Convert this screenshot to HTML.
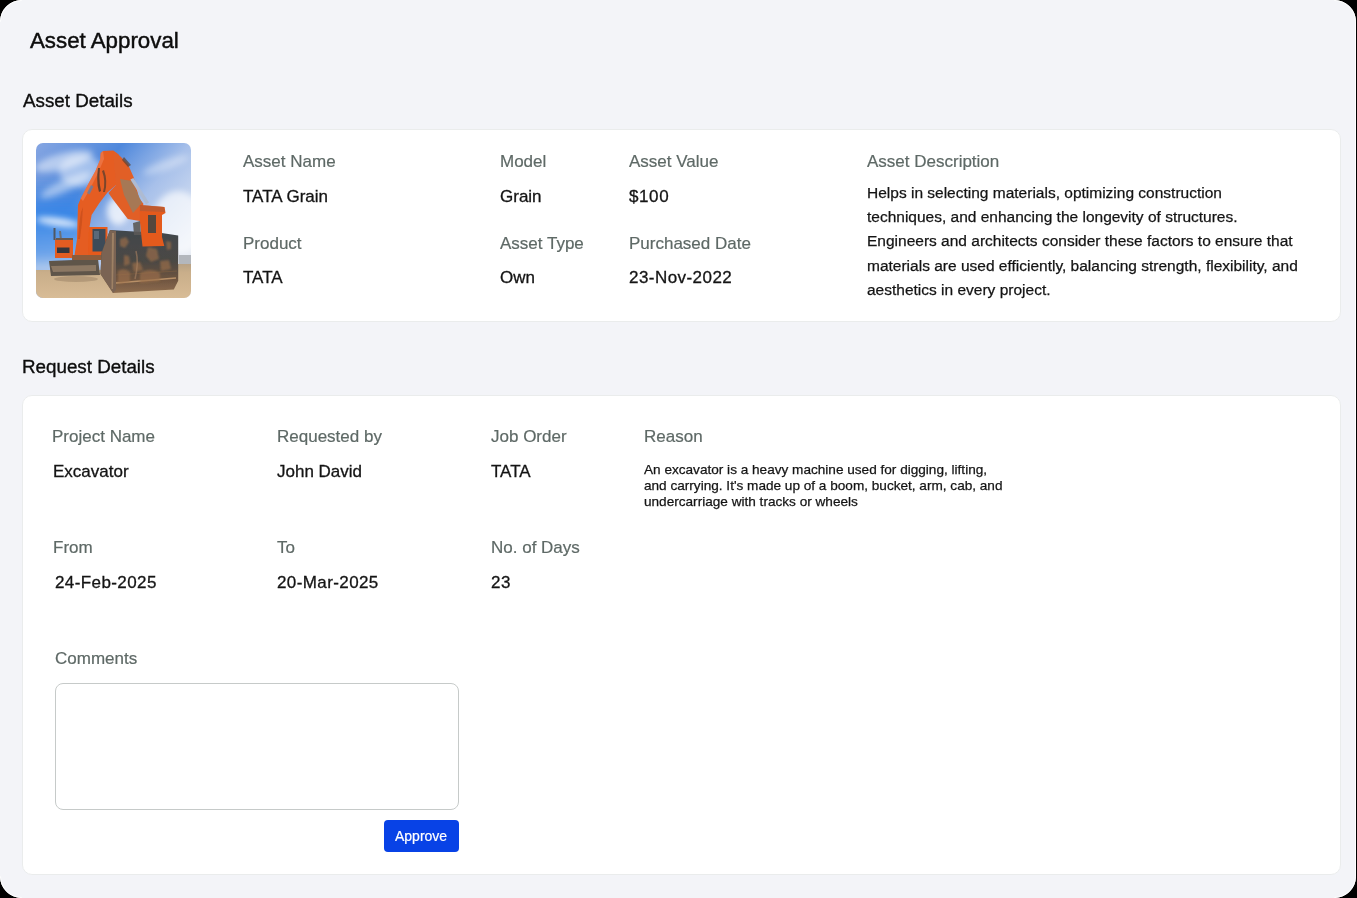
<!DOCTYPE html>
<html><head><meta charset="utf-8">
<style>
html,body{margin:0;padding:0;width:1357px;height:898px;overflow:hidden;background:#000;}
body{font-family:"Liberation Sans",sans-serif;position:relative;}
#win *{will-change:transform;}
#win{position:absolute;left:0;top:0;width:1356px;height:898px;background:#f3f4f8;overflow:hidden;}
#corners{position:absolute;left:0;top:0;width:1357px;height:898px;pointer-events:none;}
.t{position:absolute;white-space:nowrap;line-height:20px;}
.h1{font-size:22.3px;color:#0d0d0d;-webkit-text-stroke:0.45px #0d0d0d;}
.h2{font-size:18.8px;color:#0d0d0d;-webkit-text-stroke:0.35px #0d0d0d;}
.lb{font-size:17px;color:#5e6966;-webkit-text-stroke:0.2px #5e6966;}
.vl{font-size:17px;color:#141414;-webkit-text-stroke:0.3px #141414;}
.card{position:absolute;background:#fff;border:1px solid #eaecec;border-radius:10px;box-sizing:border-box;}
.desc{position:absolute;font-size:15.5px;line-height:24.2px;color:#141414;white-space:nowrap;-webkit-text-stroke:0.25px #141414;}
.reason{position:absolute;font-size:13.6px;line-height:16.2px;color:#141414;white-space:nowrap;-webkit-text-stroke:0.25px #141414;}
</style></head>
<body>
<div id="win">
  <div class="t h1" style="left:30px;top:31px;">Asset Approval</div>
  <div class="t h2" style="left:23px;top:91px;">Asset Details</div>

  <div class="card" style="left:22px;top:129px;width:1319px;height:193px;"></div>
  <div id="img" style="position:absolute;left:36px;top:143px;width:155px;height:155px;border-radius:7px;overflow:hidden;"><svg width="155" height="155" viewBox="0 0 155 155" style="display:block">
<defs>
<linearGradient id="sky" x1="0" y1="0" x2="0.9" y2="0.8">
<stop offset="0" stop-color="#86a6e2"/>
<stop offset="0.35" stop-color="#4f88dc"/>
<stop offset="0.62" stop-color="#a7c0ea"/>
<stop offset="1" stop-color="#e6ebf4"/>
</linearGradient>
<linearGradient id="skyl" x1="0" y1="0" x2="0" y2="1">
<stop offset="0" stop-color="#3a86e6" stop-opacity="0"/>
<stop offset="0.4" stop-color="#3686e8" stop-opacity="0.95"/>
<stop offset="0.8" stop-color="#6ea6ec" stop-opacity="0.85"/>
<stop offset="1" stop-color="#c8d8ee" stop-opacity="0.9"/>
</linearGradient>
<linearGradient id="ground" x1="0" y1="0" x2="0" y2="1">
<stop offset="0" stop-color="#b8a285"/>
<stop offset="0.25" stop-color="#c9ae8a"/>
<stop offset="1" stop-color="#d8bc96"/>
</linearGradient>
<linearGradient id="bk" x1="0" y1="0" x2="0" y2="1">
<stop offset="0" stop-color="#41464c"/>
<stop offset="0.5" stop-color="#4b4844"/>
<stop offset="0.78" stop-color="#6e5440"/>
<stop offset="1" stop-color="#8e6c4e"/>
</linearGradient>
<filter id="bl3" x="-50%" y="-50%" width="200%" height="200%"><feGaussianBlur stdDeviation="1.1"/></filter>
<filter id="bl" x="-50%" y="-50%" width="200%" height="200%"><feGaussianBlur stdDeviation="3"/></filter>
<filter id="bl1" x="-20%" y="-20%" width="140%" height="140%"><feGaussianBlur stdDeviation="0.45"/></filter>
</defs>
<rect width="155" height="155" fill="url(#sky)"/>
<rect x="-5" y="35" width="50" height="95" fill="url(#skyl)" filter="url(#bl)"/>
<g filter="url(#bl)" fill="#ffffff">
<ellipse cx="28" cy="18" rx="30" ry="8" opacity="0.5" transform="rotate(-15 28 18)"/><ellipse cx="45" cy="28" rx="22" ry="16" opacity="0.45"/>
<ellipse cx="30" cy="42" rx="28" ry="6" opacity="0.45" transform="rotate(-25 30 42)"/>
<ellipse cx="22" cy="79" rx="22" ry="4" opacity="0.8" transform="rotate(8 22 79)"/>
<ellipse cx="130" cy="22" rx="24" ry="5" opacity="0.35" transform="rotate(-20 130 22)"/>
<ellipse cx="142" cy="80" rx="26" ry="32" opacity="0.65"/>
<ellipse cx="82" cy="68" rx="11" ry="14" opacity="0.75"/>
</g>
<rect x="143" y="112" width="12" height="11" fill="#b3b7bd" filter="url(#bl1)"/>
<path d="M0 127 L70 127 L143 121 L155 121 L155 155 L0 155 Z" fill="url(#ground)"/>
<g filter="url(#bl1)">
<!-- tracks -->
<path d="M13 118 L62 116 L64 132 L15 133 Z" fill="#5e544a"/>
<path d="M15 123 L60 122 L60 128 L17 129 Z" fill="#8c7864"/>
<ellipse cx="40" cy="136" rx="22" ry="3" fill="#a88f70" opacity="0.7"/>
<!-- engine -->
<path d="M19 96 L37 96 L37 115 L19 115 Z" fill="#e25c22"/>
<rect x="21" y="104.5" width="12.5" height="5.5" fill="#35353a"/>
<path d="M17.5 85 L19.5 85 L19.5 97 L17.5 97 Z" fill="#505862"/>
<path d="M23 88 L25 88 L26 97 L24 97 Z" fill="#6a6f78"/>
<rect x="20" y="95" width="17" height="2" fill="#6a5a50"/>
<!-- cab -->
<path d="M51 84 L71.5 84 L71.5 115 L51 115 Z" fill="#e65a1c"/>
<path d="M56.5 86 L69.5 86 L69.5 108.5 L56.5 108.5 Z" fill="#3e4b58"/>
<path d="M58 88 L63 88 L63 96 L58 96 Z" fill="#6e7e90" opacity="0.6"/>
<rect x="36" y="112" width="30" height="5" fill="#8d5c3a"/>
<!-- boom -->
<path d="M38.5 112 L41 96.6 L41.5 78 L42 62 L44.7 55.4 L52 41.4 L59.4 28 L64.1 16.7 L64.7 10 L67 8 L77 7.5 L82.2 11.3 L85 20 L80 42 L71.4 49.4 L63.4 60 L55.6 72 L52.5 90 L52 112 Z" fill="#e55d24"/>
<path d="M44.7 55.4 L52 41.4 L59.4 28 L64.1 16.7 L64.7 10 L67 8 L68 16 L62 30 L54 46 L47 58 Z" fill="#f2845a" opacity="0.55"/>
<path d="M62 25 Q60 40 63 49 L65 48 Q62.5 38 64 25 Z" fill="#4e3c30" opacity="0.85"/><path d="M66 28 Q70 38 67 49 L69 49 Q72 38 68 27 Z" fill="#4e3c30" opacity="0.7"/>
<path d="M51 50 L55 42 L57.5 43.5 L53.5 51.5 Z" fill="#6a7ea0" opacity="0.85"/>
<path d="M42 96 L43.5 78 L45 69 L47 64 L46 80 L44 96 Z" fill="#c24a1a" opacity="0.6"/>
<!-- arm -->
<path d="M77 7.5 L82.2 11.3 L85.7 14.8 L91.8 20.9 L97.9 34.8 L103 55 L107.4 60.8 L104 78 L91.8 76 L77 56.5 L72.5 50 L80 42 Z" fill="#e15e28"/>
<path d="M84 36 L96 38 L106 60 L97 70 L88 52 Z" fill="#a07b5a" opacity="0.9"/>
<path d="M94.4 36.5 L97.4 35 L113 59.5 L110 61.5 Z" fill="#aebbd2"/>
<path d="M88 14 L95 22 L92 24 L86 17 Z" fill="#5a4030" opacity="0.7"/>
<!-- bucket -->
<path d="M74 87 L97.8 88.5 L125.6 90 L142.2 92.6 L142.2 137.8 L137.8 146.5 L77 150 L64.5 131 L65.5 110 Z" fill="url(#bk)"/>
<path d="M74 87 L80 88 L80 147 L77 150 L64.5 131 L65.5 110 Z" fill="#7a6452"/>
<path d="M76 90 L78 90 L77 146 L75.5 146 Z" fill="#a8896a" opacity="0.8"/>
<path d="M80 140 L140 135" stroke="#b89068" stroke-width="1.6"/>
<path d="M80 132 L141 128" stroke="#7d5e42" stroke-width="1.2" opacity="0.7"/>
<g fill="#9a6e4a" opacity="0.7" filter="url(#bl3)">
<path d="M84 96 l6 -2 l3 5 l-4 6 l-5 -2 z"/><path d="M88 112 l5 1 l1 8 l-6 2 z"/><path d="M112 104 l9 2 l2 10 l-8 3 l-5 -6 z"/>
<path d="M130 98 l5 1 l0 7 l-4 1 z"/><path d="M96 120 l8 -1 l3 8 l-9 2 z"/><path d="M124 118 l9 -1 l2 9 l-10 2 z"/>
<path d="M104 130 q10 -6 20 0 l0 8 l-20 2 z"/><path d="M82 128 q6 -4 12 1 l0 10 l-12 2 z"/>
</g>
<path d="M100 108 Q103 120 99 136" stroke="#a98262" stroke-width="1.5" fill="none" opacity="0.6"/>
<!-- linkage -->
<path d="M103.6 62 L128.6 64 L129.5 70 L126 72 L126 94 L128.3 103 L106.5 103.6 L104 80 Z" fill="#e45a1f"/>
<path d="M104 62 L128 64 L129 69 L104 68 Z" fill="#b65a33" opacity="0.8"/>
<path d="M112 72 L120 72 L120 90 L112 90 Z" fill="#4e4640" opacity="0.95"/>
<path d="M97 80 L104 78 L105 92 L98 92 Z" fill="#5c5a58" opacity="0.9"/>
</g>
</svg></div>

  <div class="t lb" style="left:243px;top:152px;">Asset Name</div>
  <div class="t vl" style="left:243px;top:187px;">TATA Grain</div>
  <div class="t lb" style="left:243px;top:234px;">Product</div>
  <div class="t vl" style="left:243px;top:268px;">TATA</div>

  <div class="t lb" style="left:500px;top:152px;">Model</div>
  <div class="t vl" style="left:500px;top:187px;">Grain</div>
  <div class="t lb" style="left:500px;top:234px;">Asset Type</div>
  <div class="t vl" style="left:500px;top:268px;">Own</div>

  <div class="t lb" style="left:629px;top:152px;">Asset Value</div>
  <div class="t vl" style="left:629px;top:187px;letter-spacing:0.6px;">$100</div>
  <div class="t lb" style="left:629px;top:234px;">Purchased Date</div>
  <div class="t vl" style="left:629px;top:268px;letter-spacing:0.45px;">23-Nov-2022</div>

  <div class="t lb" style="left:867px;top:152px;">Asset Description</div>
  <div class="desc" style="left:867px;top:181px;">Helps in selecting materials, optimizing construction<br>techniques, and enhancing the longevity of structures.<br>Engineers and architects consider these factors to ensure that<br>materials are used efficiently, balancing strength, flexibility, and<br>aesthetics in every project.</div>

  <div class="t h2" style="left:21.5px;top:357px;">Request Details</div>
  <div class="card" style="left:22px;top:395px;width:1319px;height:480px;"></div>

  <div class="t lb" style="left:52px;top:427px;">Project Name</div>
  <div class="t vl" style="left:53px;top:462px;">Excavator</div>
  <div class="t lb" style="left:277px;top:427px;">Requested by</div>
  <div class="t vl" style="left:277px;top:462px;">John David</div>
  <div class="t lb" style="left:491px;top:427px;">Job Order</div>
  <div class="t vl" style="left:491px;top:462px;">TATA</div>
  <div class="t lb" style="left:644px;top:427px;">Reason</div>
  <div class="reason" style="left:644px;top:461.5px;">An excavator is a heavy machine used for digging, lifting,<br>and carrying. It's made up of a boom, bucket, arm, cab, and<br>undercarriage with tracks or wheels</div>

  <div class="t lb" style="left:53px;top:538px;">From</div>
  <div class="t vl" style="left:55px;top:573px;letter-spacing:0.4px;">24-Feb-2025</div>
  <div class="t lb" style="left:277px;top:538px;">To</div>
  <div class="t vl" style="left:277px;top:573px;letter-spacing:0.4px;">20-Mar-2025</div>
  <div class="t lb" style="left:491px;top:538px;">No. of Days</div>
  <div class="t vl" style="left:491px;top:573px;letter-spacing:0.6px;">23</div>

  <div class="t lb" style="left:55px;top:649px;">Comments</div>
  <div style="position:absolute;left:55px;top:683px;width:404px;height:127px;box-sizing:border-box;border:1px solid #c6cac9;border-radius:8px;background:#fff;"></div>
  <div style="position:absolute;left:384px;top:820px;width:75px;height:32px;background:#0842e6;border-radius:4px;"></div>
  <div class="t" style="left:395px;top:826px;font-size:14px;color:#fff;-webkit-text-stroke:0.2px #fff;">Approve</div>
</div>
<svg id="corners" width="1357" height="898" viewBox="0 0 1357 898"><path d="M0.0 0.0 L21.6 0.0 A21.6 21.6 0 0 0 0.0 21.6 Z" fill="#000"/><path d="M21.6 0.5 A21.1 21.1 0 0 0 0.5 21.6" fill="none" stroke="#fff" stroke-width="1"/><path d="M1356.0 0.0 L1334.4 0.0 A21.6 21.6 0 0 1 1356.0 21.6 Z" fill="#000"/><path d="M1334.4 0.5 A21.1 21.1 0 0 1 1355.5 21.6" fill="none" stroke="#fff" stroke-width="1"/><path d="M0.0 898.0 L21.6 898.0 A21.6 21.6 0 0 1 0.0 876.4 Z" fill="#000"/><path d="M21.6 897.5 A21.1 21.1 0 0 1 0.5 876.4" fill="none" stroke="#fff" stroke-width="1"/><path d="M1356.0 898.0 L1334.4 898.0 A21.6 21.6 0 0 0 1356.0 876.4 Z" fill="#000"/><path d="M1334.4 897.5 A21.1 21.1 0 0 0 1355.5 876.4" fill="none" stroke="#fff" stroke-width="1"/><rect x="1355" y="21.6" width="1" height="854.8" fill="#fff"/><rect x="1356" y="0" width="1" height="898" fill="#000"/></svg>
</body></html>
